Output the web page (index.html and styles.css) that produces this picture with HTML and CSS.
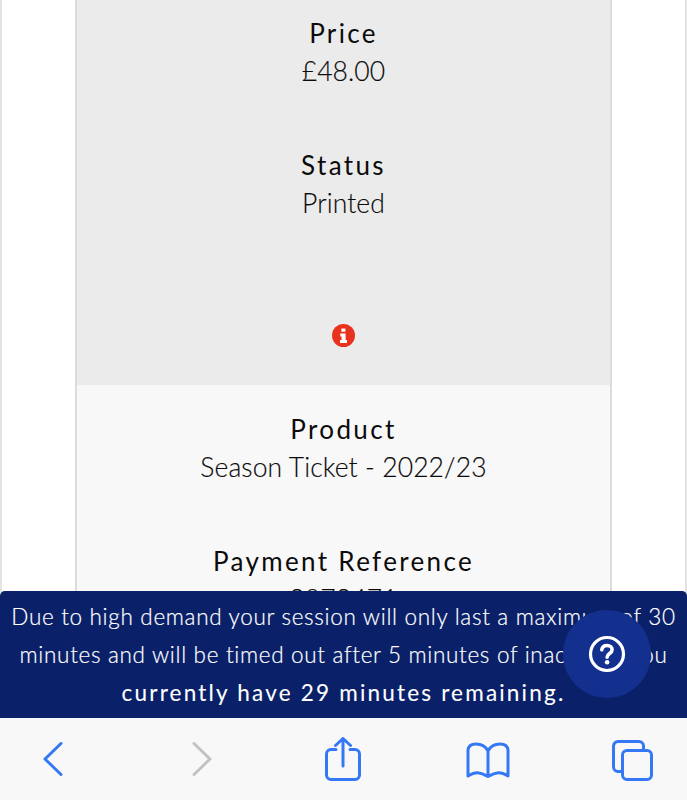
FILE: index.html
```html
<!DOCTYPE html>
<html lang="en">
<head>
<meta charset="utf-8">
<title>Ticket details</title>
<link rel="stylesheet" href="styles.css">
</head>
<body>
<div class="page">
  <main class="card">
    <section class="panel panel-dark">
      <div class="field"><h3 class="label">Price</h3><p class="value">£48.00</p></div>
      <div class="field"><h3 class="label">Status</h3><p class="value">Printed</p></div>
      <svg class="info" viewBox="0 0 24 24" aria-hidden="true">
        <circle cx="12" cy="12" r="12" fill="#e9321e"/>
        <path fill="#fff" d="M9.800 4.600h4.200v3.600H9.800zM8.600 10h5.600v6.800h1.400v3H8.400v-3h1.600v-3.800H8.600z"/>
      </svg>
    </section>
    <section class="panel panel-light">
      <div class="field"><h3 class="label">Product</h3><p class="value">Season Ticket - 2022/23</p></div>
      <div class="field"><h3 class="label">Payment Reference</h3><p class="value">2872471</p></div>
    </section>
  </main>
</div>
<div class="dock">
  <div class="banner">
    <span class="line">Due to high demand your session will only last a maximum of 30</span>
    <span class="line">minutes and will be timed out after 5 minutes of inactivity. You</span>
    <span class="line line-strong">currently have 29 minutes remaining.</span>
    <button class="help" aria-label="Help">
      <svg class="help-icon" viewBox="0 0 38 38" aria-hidden="true">
        <circle cx="19" cy="19" r="16.500" fill="none" stroke="#fff" stroke-width="3.200"/>
        <path fill="none" stroke="#fff" stroke-width="3.600" stroke-linecap="round" stroke-linejoin="round" d="M13.800 14.800c.4-2.800 2.500-4.300 5.200-4.300 2.900 0 5.100 1.700 5.100 4.200 0 3.900-5 3.800-5 7.500"/>
        <circle cx="19.100" cy="27.300" r="2.300" fill="#fff"/>
      </svg>
    </button>
  </div>
  <nav class="toolbar">
    <svg class="tool tool-back" viewBox="0 0 20 34" aria-hidden="true"><path d="M18 1.500 2 17l16 15.500"/></svg>
    <svg class="tool tool-fwd" viewBox="0 0 20 34" aria-hidden="true"><path d="M2 1.500 18 17 2 32.500"/></svg>
    <svg class="tool tool-share" viewBox="0 0 36 44" aria-hidden="true"><path d="M11 12.500H6a4.500 4.500 0 0 0-4.500 4.500v21A4.500 4.500 0 0 0 6 42.500h24a4.500 4.500 0 0 0 4.500-4.500V17a4.500 4.500 0 0 0-4.500-4.500h-5M18 29V2M10.500 8.500 18 1.500l7.500 7"/></svg>
    <svg class="tool tool-book" viewBox="0 0 44 36" aria-hidden="true"><path d="M22 9C19.500 4 15 2 10 2 6 2 2.500 3.500 2 8v26c5-3 8-3.500 11-3 4 .5 6 2 9 3.500M22 9c2.500-5 7-7 12-7 4 0 7.500 1.500 8 6v26c-5-3-8-3.500-11-3-4 .5-6 2-9 3.500zV34.500"/></svg>
    <svg class="tool tool-tabs" viewBox="0 0 41 41" aria-hidden="true"><path d="M9.500 31.500H6A4.500 4.500 0 0 1 1.500 27V6A4.500 4.500 0 0 1 6 1.500h21A4.500 4.500 0 0 1 31.500 6v3.500"/><rect x="10.500" y="10.500" width="29" height="29" rx="4.500"/></svg>
  </nav>
</div>
</body>
</html>
```
FILE: styles.css
```css
* { box-sizing: border-box; }
html, body { margin: 0; height: 800px; overflow: hidden; }
body { background: #fff; color: #0b0b0b; font-family: "Lato", "Liberation Sans", sans-serif; }
.page { height: 800px; padding: 0 73px; border-left: 2px solid #e3e3e3; border-right: 2px solid #e3e3e3; background: #fff; }
.card { border-left: 2px solid #dcdcdc; border-right: 2px solid #dcdcdc; text-align: center; }
.panel-dark { background: #ebebeb; padding: 14px 0 39px; height: 385px; }
.panel-light { background: #f8f8f8; padding-top: 25px; height: 415px; }
.field + .field { margin-top: 54px; }
.label, .value { margin: 0; height: 39px; }
.label { line-height: 39px; font-size: 26px; font-weight: 400; letter-spacing: 2.350px; }
.value { line-height: 36px; font-size: 26.500px; font-weight: 300; letter-spacing: 0.1px; -webkit-text-stroke: 0.15px #0b0b0b; }
.info { display: block; width: 23px; height: 23px; margin: 100px auto 0; }
.dock { position: fixed; left: 0; right: 0; bottom: 0; }
.banner { position: relative; height: 127px; padding-top: 7px; background: #0a2169; color: #fff; text-align: center; border-radius: 5px 5px 0 0; }
.line { display: block; height: 38px; line-height: 38px; font-size: 22.500px; font-weight: 300; letter-spacing: 0.680px; white-space: nowrap; -webkit-text-stroke: 0.2px #fff; }
.line-strong { font-weight: 400; letter-spacing: 2.200px; -webkit-text-stroke: 0.1px #fff; }
.help { position: absolute; left: 563px; top: 19px; width: 88px; height: 88px; padding: 0; display: flex; align-items: center; justify-content: center; border: 0; border-radius: 50%; background: #14308f; }
.help-icon { width: 38px; height: 38px; display: block; }
.toolbar { height: 82px; padding: 19px 0 0 43px; background: #f8f8f8; display: grid; grid-template-columns: 149px 133px 141px 146px auto; align-items: start; justify-items: start; }
.tool { display: block; fill: none; stroke: #3478f6; stroke-width: 3; stroke-linecap: round; stroke-linejoin: round; }
.tool-back { width: 20px; height: 34px; margin-top: 5px; }
.tool-fwd { width: 20px; height: 34px; margin-top: 5px; stroke: #c2c2c2; }
.tool-share { width: 36px; height: 44px; }
.tool-book { width: 44px; height: 36px; margin-top: 5px; }
.tool-tabs { width: 41px; height: 41px; margin-top: 3px; }
```
